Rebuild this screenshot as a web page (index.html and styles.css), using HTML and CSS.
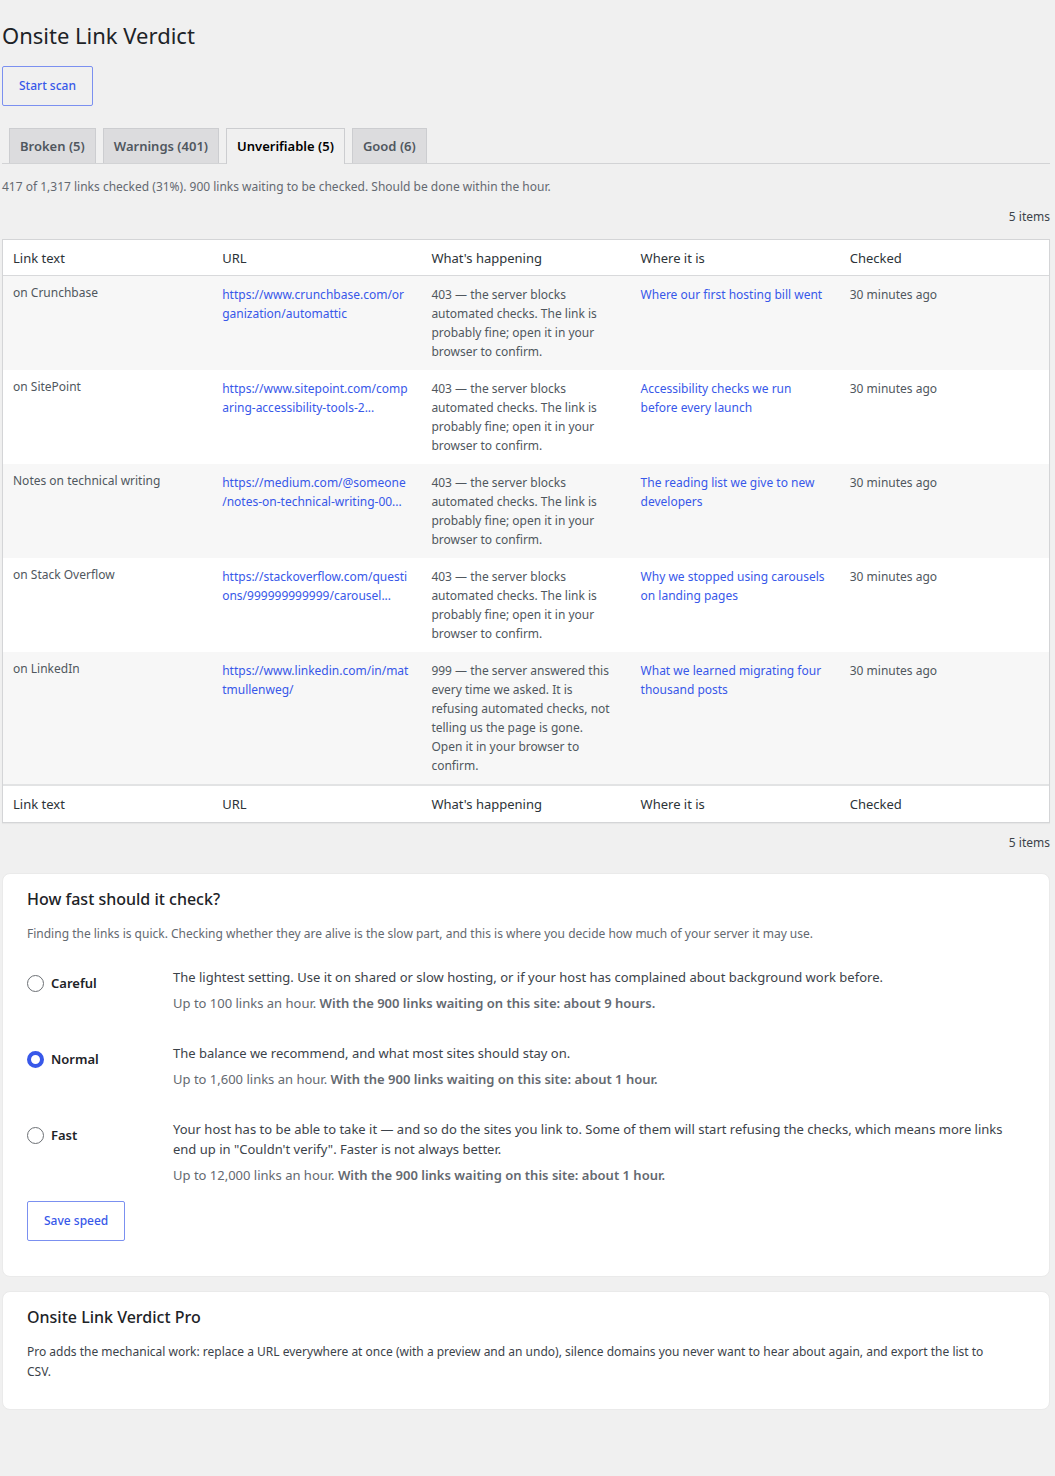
FILE: index.html
```html
<!DOCTYPE html>
<html lang="en">
<head>
<meta charset="utf-8">
<meta name="viewport" content="width=device-width, initial-scale=1">
<title>Onsite Link Verdict</title>
<link rel="stylesheet" href="styles.css">
</head>
<body>
<main class="wrap">
  <h1 class="page-title">Onsite Link Verdict</h1>
  <button type="button" class="button">Start scan</button>

  <nav class="tabs" aria-label="Link status">
    <a class="tab" href="#broken">Broken (5)</a>
    <a class="tab" href="#warnings">Warnings (401)</a>
    <a class="tab tab-active" href="#unverifiable" aria-current="page">Unverifiable (5)</a>
    <a class="tab" href="#good">Good (6)</a>
  </nav>

  <p class="status">417 of 1,317 links checked (31%). 900 links waiting to be checked. Should be done within the hour.</p>
  <p class="count">5 items</p>

  <table class="links">
    <thead>
      <tr><th scope="col">Link text</th><th scope="col">URL</th><th scope="col">What's happening</th><th scope="col">Where it is</th><th scope="col">Checked</th></tr>
    </thead>
    <tbody>
      <tr>
        <td class="link-text">on Crunchbase</td>
        <td class="url"><a href="#">https://www.crunchbase.com/or<wbr>ganization/automattic</a></td>
        <td>403 — the server blocks automated checks. The link is probably fine; open it in your browser to confirm.</td>
        <td><a href="#">Where our first hosting bill went</a></td>
        <td>30 minutes ago</td>
      </tr>
      <tr>
        <td class="link-text">on SitePoint</td>
        <td class="url"><a href="#">https://www.sitepoint.com/comp<wbr>aring-accessibility-tools-2...</a></td>
        <td>403 — the server blocks automated checks. The link is probably fine; open it in your browser to confirm.</td>
        <td><a href="#">Accessibility checks we run before every launch</a></td>
        <td>30 minutes ago</td>
      </tr>
      <tr>
        <td class="link-text">Notes on technical writing</td>
        <td class="url"><a href="#">https://medium.com/@someone<wbr>/notes-on-technical-writing-00...</a></td>
        <td>403 — the server blocks automated checks. The link is probably fine; open it in your browser to confirm.</td>
        <td><a href="#">The reading list we give to new developers</a></td>
        <td>30 minutes ago</td>
      </tr>
      <tr>
        <td class="link-text">on Stack Overflow</td>
        <td class="url"><a href="#">https://stackoverflow.com/questi<wbr>ons/999999999999/carousel...</a></td>
        <td>403 — the server blocks automated checks. The link is probably fine; open it in your browser to confirm.</td>
        <td><a href="#">Why we stopped using carousels on landing pages</a></td>
        <td>30 minutes ago</td>
      </tr>
      <tr>
        <td class="link-text">on LinkedIn</td>
        <td class="url"><a href="#">https://www.linkedin.com/in/mat<wbr>tmullenweg/</a></td>
        <td>999 — the server answered this every time we asked. It is refusing automated checks, not telling us the page is gone. Open it in your browser to confirm.</td>
        <td><a href="#">What we learned migrating four thousand posts</a></td>
        <td>30 minutes ago</td>
      </tr>
    </tbody>
    <tfoot>
      <tr><th scope="col">Link text</th><th scope="col">URL</th><th scope="col">What's happening</th><th scope="col">Where it is</th><th scope="col">Checked</th></tr>
    </tfoot>
  </table>
  <p class="count">5 items</p>

  <section class="card card-speed">
    <h2 class="card-title">How fast should it check?</h2>
    <p class="card-intro">Finding the links is quick. Checking whether they are alive is the slow part, and this is where you decide how much of your server it may use.</p>
    <form>
      <div class="options">
        <div class="option">
          <label class="option-label" for="careful"><input class="radio" type="radio" name="speed" id="careful">Careful</label>
          <div>
            <p class="option-text">The lightest setting. Use it on shared or slow hosting, or if your host has complained about background work before.</p>
            <p class="option-note">Up to 100 links an hour. <strong>With the 900 links waiting on this site: about 9 hours.</strong></p>
          </div>
        </div>
        <div class="option">
          <label class="option-label" for="normal"><input class="radio" type="radio" name="speed" id="normal" checked>Normal</label>
          <div>
            <p class="option-text">The balance we recommend, and what most sites should stay on.</p>
            <p class="option-note">Up to 1,600 links an hour. <strong>With the 900 links waiting on this site: about 1 hour.</strong></p>
          </div>
        </div>
        <div class="option">
          <label class="option-label" for="fast"><input class="radio" type="radio" name="speed" id="fast">Fast</label>
          <div>
            <p class="option-text">Your host has to be able to take it — and so do the sites you link to. Some of them will start refusing the checks, which means more links end up in "Couldn't verify". Faster is not always better.</p>
            <p class="option-note">Up to 12,000 links an hour. <strong>With the 900 links waiting on this site: about 1 hour.</strong></p>
          </div>
        </div>
      </div>
      <button type="submit" class="button">Save speed</button>
    </form>
  </section>

  <section class="card card-pro">
    <h2 class="card-title">Onsite Link Verdict Pro</h2>
    <p class="card-text">Pro adds the mechanical work: replace a URL everywhere at once (with a preview and an undo), silence domains you never want to hear about again, and export the list to CSV.</p>
  </section>
</main>
</body>
</html>
```
FILE: styles.css
```css
* {
  box-sizing: border-box;
}

body {
  margin: 0;
  background: #f0f0f0;
  color: #3c434a;
  font: 12px/20px "Segoe UI", "Noto Sans", "Open Sans", sans-serif;
}

h1, h2, p {
  margin: 0;
}

a {
  color: #3858e9;
  text-decoration: none;
}

.wrap {
  padding: 20px 5px 24px 2px;
}

.page-title {
  margin-bottom: 16px;
  color: #1d2327;
  font-size: 22px;
  font-weight: 400;
  line-height: 30px;
}

.button {
  display: block;
  height: 40px;
  padding: 0 16px;
  border: 1px solid #7b90f0;
  border-radius: 2px;
  background: transparent;
  color: #3858e9;
  font: inherit;
  font-weight: 500;
  cursor: pointer;
}

.tabs {
  display: flex;
  gap: 7px;
  margin-top: 22px;
  padding-left: 7px;
  border-bottom: 1px solid #d2d3d5;
}

.tab {
  padding: 5px 10px;
  border: 1px solid #cccdd0;
  border-bottom: 0;
  background: #dcdcde;
  color: #50575e;
  font-size: 13px;
  font-weight: 600;
  line-height: 24px;
}

.tab-active {
  margin-bottom: -1px;
  padding-bottom: 6px;
  background: #f0f0f0;
  color: #000;
}

.status {
  margin-top: 13px;
  color: #646970;
}

.count {
  margin-top: 10px;
  text-align: right;
}

.links {
  width: 100%;
  margin-top: 12px;
  border: 1px solid #d4d5d7;
  border-spacing: 0;
  table-layout: fixed;
  background: #fff;
  box-shadow: 0 1px 1px rgba(0, 0, 0, 0.04);
}

.links th {
  height: 36px;
  padding: 7px 10px;
  color: #2c3338;
  font-size: 13px;
  font-weight: 400;
  text-align: left;
}

.links thead th {
  border-bottom: 1px solid #d8d9db;
}

.links tfoot th {
  height: 38px;
  border-top: 2px solid #e2e3e4;
}

.links td {
  padding: 9px 14px 9px 10px;
  color: #50575e;
  line-height: 19px;
  vertical-align: top;
}

.links .link-text {
  line-height: 16px;
}

.links .url {
  padding-right: 4px;
}

.links tbody tr:nth-child(odd) {
  background: #f7f7f7;
}

.card {
  padding: 13px 24px 0;
  border: 1px solid #eaeaea;
  border-radius: 8px;
  background: #fff;
}

.card-speed {
  margin-top: 20px;
  padding-bottom: 35px;
}

.card-pro {
  margin-top: 14px;
  padding-bottom: 27px;
}

.card-title {
  margin-bottom: 13px;
  color: #1d2327;
  font-size: 16px;
  font-weight: 500;
  line-height: 24px;
}

.card-intro {
  color: #646970;
}

.card-text {
  padding-right: 24px;
}

.options {
  display: grid;
  gap: 30px;
  margin: 23px 0 16px;
}

.option {
  display: grid;
  grid-template-columns: 146px 1fr;
  align-items: start;
}

.option-label {
  display: flex;
  align-items: center;
  gap: 7px;
  padding-top: 6px;
  color: #1d2327;
  font-size: 13px;
  font-weight: 600;
}

.radio {
  appearance: none;
  width: 17px;
  height: 17px;
  margin: 0;
  border: 1px solid #6c7075;
  border-radius: 50%;
  background: #fff;
}

.radio:checked {
  border: 4px solid #3858e9;
}

.option-text {
  font-size: 13px;
}

.option-note {
  margin-top: 6px;
  color: #646970;
  font-size: 13px;
}

.option-note strong {
  font-weight: 600;
}
```
